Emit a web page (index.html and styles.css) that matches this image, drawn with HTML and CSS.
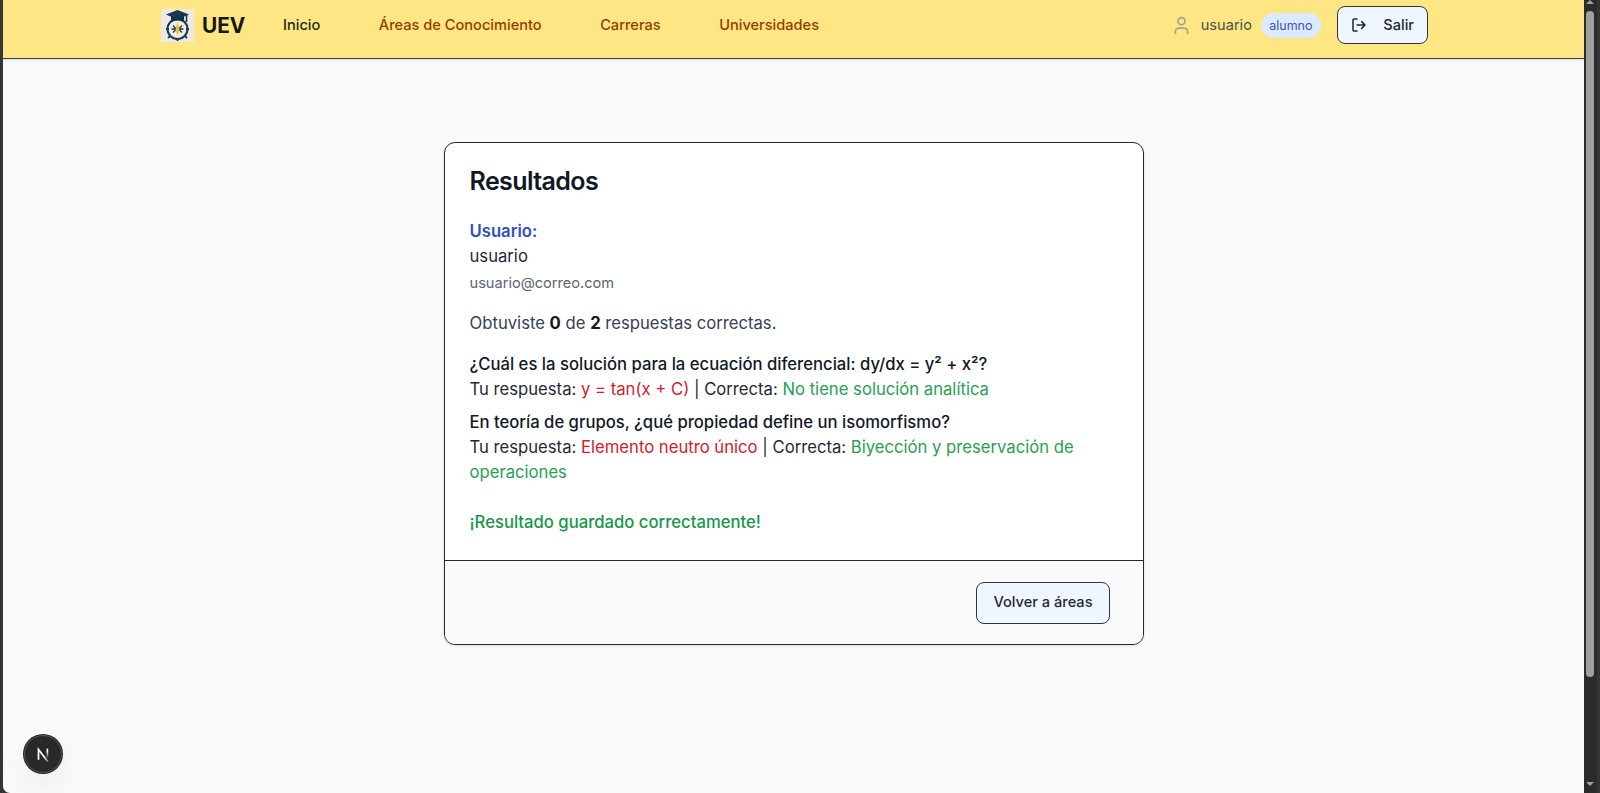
FILE: index.html
```html
<!DOCTYPE html>
<html lang="es">
<head>
<meta charset="utf-8">
<title>UEV - Resultados</title>
<link rel="stylesheet" href="styles.css">
</head>
<body>
<div class="window">
  <div class="page">
    <header class="navbar">
      <a class="brand">
        <svg class="logo" viewBox="0 0 33 33">
          <rect width="33" height="33" fill="#eeeae2"/>
          <circle cx="16.500" cy="20" r="10" fill="#f1eee8" stroke="#1d3b54" stroke-width="2"/>
          <path d="M16.500 29v3M5 20h3M25 20h3M9 27l-2 2M24 27l2 2" stroke="#1d3b54" stroke-width="1.800"/>
          <path d="M10 7v6q6.500-3 13 0V7z" fill="#12304c"/>
          <path d="M5 5.500 16.500 1 28 5.500l-11.500 5z" fill="#17374f"/>
          <path d="M25.500 6v7" stroke="#17374f" stroke-width="1.500"/>
          <path d="M16.500 13l1.500 5 3.500 2-3.500 2-1.500 5-1.500-5-3.500-2 3.500-2z" fill="#e9bd43"/>
          <path d="M12 16.500l2 2v3l-2 2M21 16.500l-2 2v3l2 2M10.500 20H14M19 20h3.500" fill="none" stroke="#1d3b54" stroke-width="1.300"/>
        </svg>
        <span class="brand-name">UEV</span>
      </a>
      <nav class="links">
        <a class="link active">Inicio</a>
        <a class="link">Áreas de Conocimiento</a>
        <a class="link">Carreras</a>
        <a class="link">Universidades</a>
      </nav>
      <div class="account">
        <svg class="user-icon" viewBox="0 0 24 24"><path d="M19 21v-2a4 4 0 0 0-4-4H9a4 4 0 0 0-4 4v2"/><circle cx="12" cy="7" r="4"/></svg>
        <span class="user-name">usuario</span>
        <span class="badge">alumno</span>
        <button class="btn logout">
          <svg class="logout-icon" viewBox="0 0 24 24"><path d="M9 21H5a2 2 0 0 1-2-2V5a2 2 0 0 1 2-2h4M16 17l5-5-5-5M21 12H9"/></svg>
          <span>Salir</span>
        </button>
      </div>
    </header>
    <main class="content">
      <section class="card">
        <div class="card-body">
          <h1 class="title">Resultados</h1>
          <p class="label">Usuario:</p>
          <p class="name">usuario</p>
          <p class="email">usuario@correo.com</p>
          <p class="score">Obtuviste <b>0</b> de <b>2</b> respuestas correctas.</p>
          <ul class="answers">
            <li><p class="question">¿Cuál es la solución para la ecuación diferencial: dy/dx = y² + x²?</p>
              <p>Tu respuesta: <span class="wrong">y = tan(x + C)</span> | Correcta: <span class="right">No tiene solución analítica</span></p></li>
            <li><p class="question">En teoría de grupos, ¿qué propiedad define un isomorfismo?</p>
              <p>Tu respuesta: <span class="wrong">Elemento neutro único</span> | Correcta: <span class="right">Biyección y preservación de operaciones</span></p></li>
          </ul>
          <p class="saved">¡Resultado guardado correctamente!</p>
        </div>
        <footer class="card-footer"><button class="btn back">Volver a áreas</button></footer>
      </section>
    </main>
    <div class="dev-badge">
      <svg viewBox="0 0 40 40">
        <defs>
          <linearGradient id="fade-down" x1="0" y1="0" x2="0" y2="1"><stop offset=".3" stop-color="#fff"/><stop offset="1" stop-color="#fff" stop-opacity="0"/></linearGradient>
          <linearGradient id="fade-diag" x1="0" y1="0" x2="1" y2="1"><stop offset=".65" stop-color="#fff"/><stop offset="1" stop-color="#fff" stop-opacity=".3"/></linearGradient>
        </defs>
        <path d="M15 26.500V15L25.500 28.500" fill="none" stroke="url(#fade-diag)" stroke-width="1.900"/>
        <rect x="24" y="14" width="1.800" height="11" fill="url(#fade-down)"/>
      </svg>
    </div>
  </div>
  <div class="scrollbar">
    <svg class="arrow" viewBox="0 0 8 4"><path d="M0 4 4 0l4 4z"/></svg>
    <div class="thumb"></div>
    <svg class="arrow down" viewBox="0 0 8 4"><path d="M0 0h8L4 4z"/></svg>
  </div>
</div>
</body>
</html>
```
FILE: styles.css
```css
* { box-sizing: border-box; margin: 0; padding: 0; }
body { background: #363534; font-family: Inter, "Noto Sans", sans-serif; font-size: 16.67px; line-height: 25px; color: #1f2937; overflow: hidden; }
.window { display: flex; height: 793px; padding-left: 3px; }
.page { position: relative; width: 1581px; background: #f9fafb; border-bottom-left-radius: 7px; overflow: hidden; }
.navbar { display: flex; align-items: center; height: 59px; padding: 0 156px 8px 158px; background: #fee685; border-bottom: 1px solid #3d3e2e; box-shadow: 0 1px 3px rgba(0,0,0,.12); }
.brand { display: flex; align-items: center; gap: 8px; width: 122px; }
.logo { width: 33px; height: 33px; }
.brand-name { font-size: 20.8px; font-weight: 700; color: #17180f; }
.links { display: flex; gap: 58.500px; font-size: 14.600px; font-weight: 500; color: #973c00; }
.active { color: #1f2910; }
.account { display: flex; align-items: center; margin-left: auto; }
.user-icon { width: 21px; height: 21px; fill: none; stroke: #a8a18b; stroke-width: 2; stroke-linecap: round; stroke-linejoin: round; }
.user-name { margin-left: 8.500px; font-size: 14.600px; color: #4f5245; }
.badge { margin-left: 9px; padding: 0 8.300px; border-radius: 13px; background: #dbeafe; color: #4053b5; font-size: 12.500px; line-height: 25px; }
.btn { display: flex; align-items: center; border: 1px solid #30343c; background: #eff6ff; color: #1e2939; font-family: inherit; font-size: 14.600px; font-weight: 500; line-height: 21px; }
.logout { height: 38px; margin-left: 16px; padding: 0 13px; border-radius: 8px; gap: 16.500px; }
.logout-icon { width: 16px; height: 16px; fill: none; stroke: #1e2939; stroke-width: 2.300; stroke-linecap: round; stroke-linejoin: round; }
.content { display: flex; justify-content: center; padding: 83px 0 0 1px; }
.card { width: 700px; height: 503px; border: 1px solid #25272c; border-radius: 11px; background: #fff; box-shadow: 0 1px 3px rgba(0,0,0,.12); overflow: hidden; }
.card-body { height: 417px; padding: 25.500px 24.500px 0; }
.title { margin-bottom: 25px; font-size: 25px; line-height: 25px; font-weight: 600; letter-spacing: -.6px; color: #101828; }
.label { font-weight: 600; color: #2f4fc0; }
.email { margin-top: 4px; font-size: 14.600px; line-height: 21px; color: #5b6471; }
.score { margin-top: 17px; color: #364153; }
.score b { font-weight: 700; color: #101828; }
.answers { display: flex; flex-direction: column; gap: 8.300px; margin-top: 16.500px; list-style: none; }
.question { font-weight: 500; color: #101828; }
.wrong { color: #d3202c; }
.right { color: #28a052; }
.saved { margin-top: 25px; font-weight: 500; color: #169747; }
.card-footer { display: flex; justify-content: flex-end; align-items: center; height: 84px; padding-right: 33px; border-top: 1px solid #25272c; background: #f9fafb; }
.back { height: 42px; padding: 0 16.500px; border-radius: 8px; }
.dev-badge { position: absolute; left: 21px; bottom: 20px; width: 38px; height: 38px; border-radius: 50%; background: #292929; border: 1px solid #555; box-shadow: 0 0 0 1px #242424, 0 12px 30px rgba(0,0,0,.07); }
.dev-badge svg { display: block; }
.scrollbar { display: flex; flex-direction: column; width: 13px; padding: 0 3px 7px 2px; background: #2b2b2b; }
.arrow { width: 8px; height: 4px; fill: #a2a2a2; }
.thumb { height: 666px; margin-top: 7px; border-radius: 4px; background: #9f9f9f; }
.down { margin-top: auto; }
```
